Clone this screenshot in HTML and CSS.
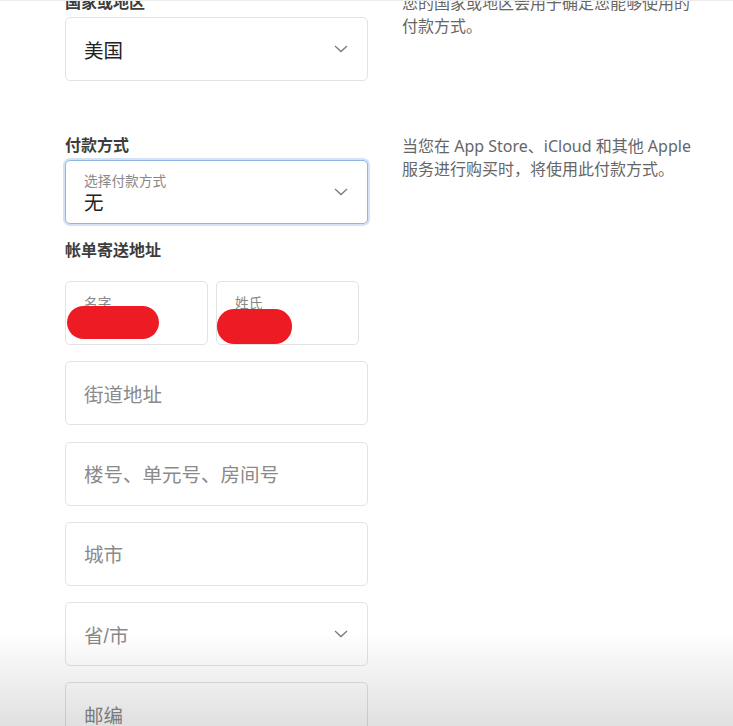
FILE: index.html
```html
<!DOCTYPE html>
<html lang="zh-CN">
<head>
<meta charset="utf-8">
<title>付款信息</title>
<link rel="stylesheet" href="styles.css">
</head>
<body>
<div class="topline"></div>
<main class="page">
  <section class="row row-country">
    <div class="col">
      <div class="label">国家或地区</div>
      <div class="box select">
        <span class="value">美国</span>
        <svg class="chev" width="14" height="8" viewBox="0 0 14 8"><path d="M1 1l6 5.5L13 1" fill="none" stroke="#7a7a7a" stroke-width="1.3"/></svg>
      </div>
    </div>
    <p class="note">您的国家或地区会用于确定您能够使用的<br>付款方式。</p>
  </section>

  <section class="row row-pay">
    <div class="col">
      <div class="label">付款方式</div>
      <div class="box select focus">
        <div class="stack">
          <span class="small">选择付款方式</span>
          <span class="value">无</span>
        </div>
        <svg class="chev" width="14" height="8" viewBox="0 0 14 8"><path d="M1 1l6 5.5L13 1" fill="none" stroke="#7a7a7a" stroke-width="1.3"/></svg>
      </div>
      <div class="label billing">帐单寄送地址</div>
      <div class="fields">
        <div class="names">
          <div class="box name">
            <span class="small">名字</span>
            <div class="redact r1"></div>
          </div>
          <div class="box name">
            <span class="small">姓氏</span>
            <div class="redact r2"></div>
          </div>
        </div>
        <div class="box"><span class="ph">街道地址</span></div>
        <div class="box"><span class="ph">楼号、单元号、房间号</span></div>
        <div class="box"><span class="ph">城市</span></div>
        <div class="box select">
          <span class="ph">省/市</span>
          <svg class="chev" width="14" height="8" viewBox="0 0 14 8"><path d="M1 1l6 5.5L13 1" fill="none" stroke="#7a7a7a" stroke-width="1.3"/></svg>
        </div>
        <div class="box"><span class="ph">邮编</span></div>
      </div>
    </div>
    <p class="note">当您在 App Store、iCloud 和其他 Apple<br>服务进行购买时，将使用此付款方式。</p>
  </section>
</main>
<div class="fade"></div>
</body>
</html>
```

FILE: styles.css
```css
html, body {
  margin: 0;
  padding: 0;
  background: #fff;
  overflow: hidden;
}
body {
  font-family: "Liberation Sans", "Noto Sans CJK SC", sans-serif;
  color: #333;
}
.topline {
  height: 1px;
  background: #ececec;
  position: absolute;
  top: 0;
  left: 0;
  right: 0;
  z-index: 2;
}
.page {
  padding-left: 65px;
  margin-top: -7px;
}
.row {
  display: flex;
  gap: 34px;
  align-items: flex-start;
}
.row-pay {
  margin-top: 55px;
}
.col {
  width: 303px;
  flex: none;
  display: flex;
  flex-direction: column;
}
.label {
  font-size: 16px;
  font-weight: bold;
  line-height: 20px;
  color: #3d3d3d;
  margin-bottom: 4px;
}
.label.billing {
  margin-top: 17px;
  margin-bottom: 20px;
}
.note {
  margin: 0;
  font-family: "Noto Sans", "Noto Sans CJK SC", sans-serif;
  font-size: 16px;
  line-height: 23px;
  color: #666;
  margin-top: -1px;
  white-space: nowrap;
}
.box {
  position: relative;
  box-sizing: border-box;
  height: 64px;
  border: 1px solid #e3e3e3;
  border-radius: 5px;
  background: #fff;
  display: flex;
  align-items: center;
  padding: 0 18px;
}
.select {
  justify-content: space-between;
}
.focus {
  border: 1px solid #8fb6e4;
  box-shadow: 0 0 0 2px #d2e3f7;
}
.chev {
  margin-right: 1px;
  flex: none;
}
.value {
  font-size: 19.5px;
  color: #222;
}
.stack {
  display: flex;
  flex-direction: column;
  margin-top: 4px;
}
.stack .small {
  line-height: 18px;
}
.stack .value {
  line-height: 24px;
}
.small {
  font-size: 13.7px;
  color: #888;
}
.ph {
  font-size: 19.5px;
  color: #8a8a8a;
}
.fields {
  display: flex;
  flex-direction: column;
  gap: 16.3px;
}
.names {
  display: flex;
  gap: 8px;
}
.box.name {
  width: 143px;
  align-items: flex-start;
  padding-top: 10px;
}
.redact {
  position: absolute;
  background: #ed1c24;
  border-radius: 17px;
}
.r1 {
  left: 1px;
  top: 24px;
  width: 92px;
  height: 33px;
}
.r2 {
  left: 0px;
  top: 27px;
  width: 75px;
  height: 35px;
}
.fade {
  position: fixed;
  left: 0;
  right: 0;
  bottom: 0;
  height: 95px;
  background: linear-gradient(rgba(0,0,0,0), rgba(0,0,0,0.12));
  pointer-events: none;
}
```
